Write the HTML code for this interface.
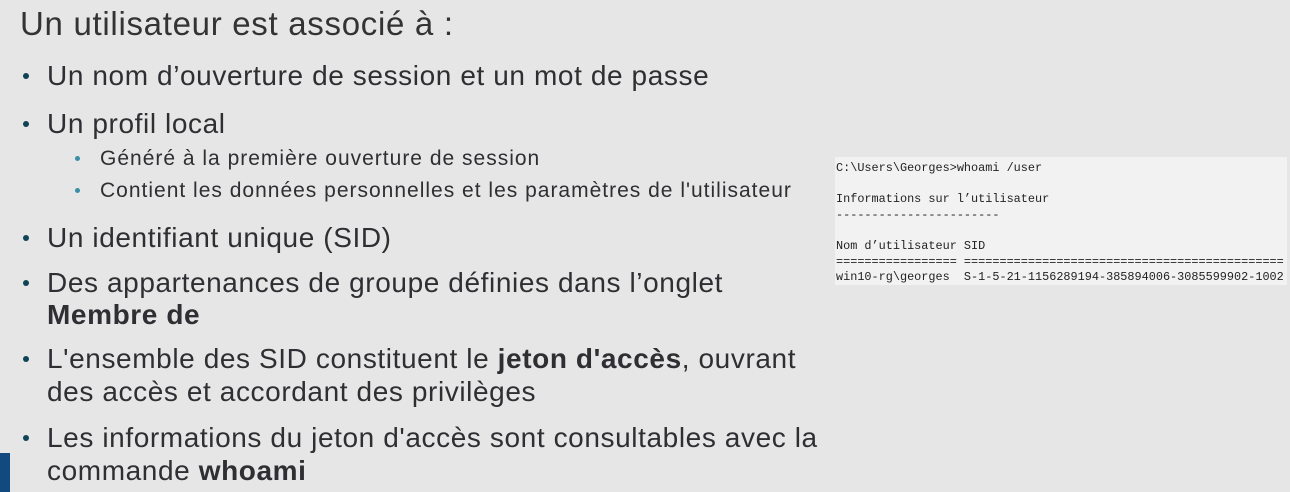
<!DOCTYPE html>
<html><head><meta charset="utf-8"><style>
body{margin:0;width:1290px;height:492px;background:#e5e6e5;overflow:hidden;position:relative;font-family:"Liberation Sans",sans-serif;color:#2f2f33}
.t{position:absolute;white-space:nowrap;line-height:1}
.b{position:absolute;width:6px;height:6px;border-radius:50%;background:#0e4455}
.s{position:absolute;width:5px;height:5px;border-radius:50%;background:#3a8fa6}
.m{font-size:28px;letter-spacing:0.6px}
.sub{font-size:21px;letter-spacing:1px}
pre{position:absolute;left:835px;top:157px;width:452px;height:128px;margin:0;background:#f2f2f2;font-family:"Liberation Mono",monospace;font-size:11.85px;line-height:15.6px;color:#222;padding:4px 0 0 1px;box-sizing:border-box;overflow:hidden}
</style></head><body>
<div class="t" style="left:20px;top:7px;font-size:33px;letter-spacing:0.7px;color:#333">Un utilisateur est associé à :</div>

<div class="b" style="left:23px;top:73px"></div>
<div class="t m" style="left:47px;top:62px">Un nom d’ouverture de session et un mot de passe</div>
<div class="b" style="left:23px;top:121px"></div>
<div class="t m" style="left:47px;top:110px">Un profil local</div>
<div class="s" style="left:75px;top:156px"></div>
<div class="t sub" style="left:100px;top:148px">Généré à la première ouverture de session</div>
<div class="s" style="left:75px;top:188px"></div>
<div class="t sub" style="left:100px;top:180px">Contient les données personnelles et les paramètres de l'utilisateur</div>
<div class="b" style="left:23px;top:235px"></div>
<div class="t m" style="left:47px;top:224px">Un identifiant unique (SID)</div>
<div class="b" style="left:23px;top:280px"></div>
<div class="t m" style="left:47px;top:269px">Des appartenances de groupe définies dans l’onglet</div>
<div class="t m" style="left:47px;top:301px;font-weight:bold">Membre de</div>
<div class="b" style="left:23px;top:356px"></div>
<div class="t m" style="left:47px;top:345px">L'ensemble des SID constituent le <b>jeton d'accès</b>, ouvrant</div>
<div class="t m" style="left:47px;top:378px">des accès et accordant des privilèges</div>
<div class="b" style="left:23px;top:435px"></div>
<div class="t m" style="left:47px;top:424px">Les informations du jeton d'accès sont consultables avec la</div>
<div class="t m" style="left:47px;top:457px">commande <b>whoami</b></div>

<div style="position:absolute;left:0;top:453px;width:10px;height:39px;background:#124a80"></div>

<pre>C:\Users\Georges>whoami /user

Informations sur l’utilisateur
-----------------------

Nom d’utilisateur SID
================= =============================================
win10-rg\georges  S-1-5-21-1156289194-385894006-3085599902-1002</pre>
</body></html>
